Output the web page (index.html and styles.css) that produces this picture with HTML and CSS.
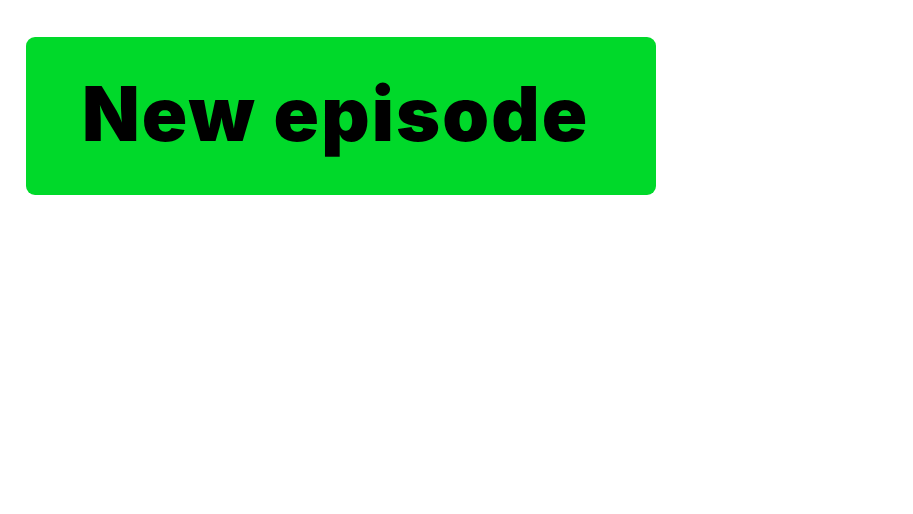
FILE: index.html
```html
<!DOCTYPE html>
<html>
<head>
<meta charset="utf-8">
<link rel="stylesheet" href="styles.css">
</head>
<body>
<main class="page">
  <button class="cta">New episode</button>
</main>
</body>
</html>
```

FILE: styles.css
```css
html, body {
  margin: 0;
  padding: 0;
  background: #ffffff;
}
.page {
  padding: 37px 0 0 26px;
}
.cta {
  display: flex;
  align-items: center;
  box-sizing: border-box;
  width: 630px;
  height: 158px;
  padding: 0 0 6px 56px;
  border: none;
  border-radius: 9px;
  background: #00d92a;
  color: #000000;
  font-family: "Inter", "Liberation Sans", sans-serif;
  font-weight: 900;
  font-size: 75px;
  letter-spacing: 2.1px;
  cursor: pointer;
}
```
